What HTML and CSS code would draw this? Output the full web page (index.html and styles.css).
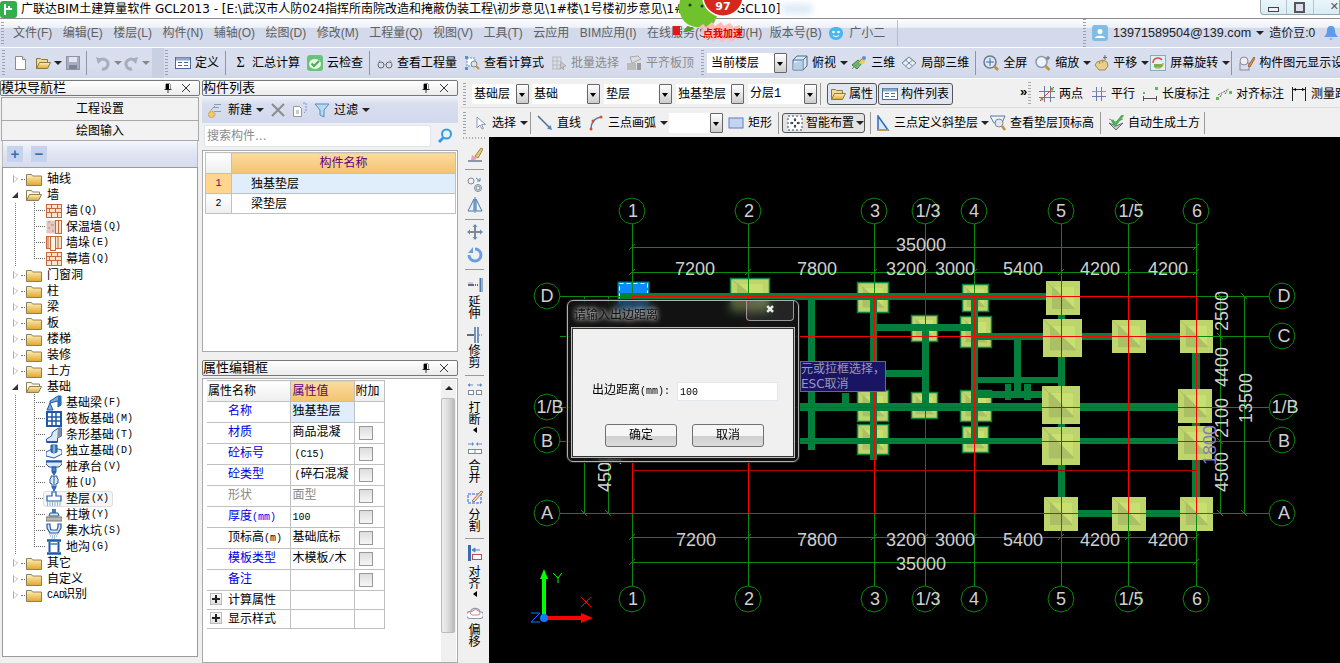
FILE: index.html
```html
<!DOCTYPE html>
<html lang="zh">
<head>
<meta charset="utf-8">
<title>广联达BIM土建算量软件</title>
<link rel="stylesheet" href="styles.css">
</head>
<body>
<svg class="defs" xmlns="http://www.w3.org/2000/svg">
<defs>
<linearGradient id="fy" x1="0" y1="0" x2="0" y2="1"><stop offset="0" stop-color="#fff2b8"/><stop offset="1" stop-color="#e0a530"/></linearGradient>
<symbol id="folder" viewBox="0 0 16 16"><path d="M.5 3.500h5l1 1.500h9v9.500H.5z" fill="url(#fy)" stroke="#8a8060"/></symbol>
<symbol id="folderopen" viewBox="0 0 16 16"><path d="M.5 13.500v-10h5l1 1.500h7v2" fill="#fff8dc" stroke="#8a8060"/><path d="M.5 13.500l3-6h12l-3 6z" fill="url(#fy)" stroke="#8a8060"/></symbol>
<symbol id="brick" viewBox="0 0 16 16"><rect x=".5" y="1.500" width="15" height="13" fill="#f8e4cc" stroke="#c8673a"/><path d="M0 5.500h16M0 9.500h16M5.500 2v3M11.500 2v3M3.500 6v3M9.500 6v3M5.500 10v4M11.500 10v4" stroke="#c8673a" fill="none"/></symbol>
<symbol id="ins" viewBox="0 0 16 16"><rect x=".5" y="1.500" width="9" height="13" fill="#e4c8bc"/><path d="M2 3h2M5 6h3M2 9h2M6 12h2" stroke="#b88" fill="none"/><rect x="9.500" y="1.500" width="6" height="13" fill="#f8e4cc" stroke="#c8673a"/><path d="M12.500 2v12" stroke="#c8673a"/></symbol>
<symbol id="pier" viewBox="0 0 16 16"><rect x=".5" y="1.500" width="15" height="12" fill="#f8e4cc" stroke="#c8673a"/><rect x="4.500" y="1.500" width="5" height="14" fill="#fdf4e8" stroke="#c8673a"/><path d="M12 2v11M2 2v11" stroke="#c8673a"/></symbol>
<symbol id="fbeam" viewBox="0 0 16 16"><path d="M1 15l3-7 3 7zM4 8V6l8-5h3v9l-3 2V6z" fill="#7fa8d8" stroke="#1f5aa8"/><path d="M12 1h3v9l-3 2z" fill="#2a6cc0"/></symbol>
<symbol id="raft" viewBox="0 0 16 16"><rect x="1" y="1" width="14" height="14" fill="#fff" stroke="#1f5aa8" stroke-width="2"/><path d="M6 1v14M10 1v14M1 6h14M1 10h14" stroke="#1f5aa8" stroke-width="1.500"/></symbol>
<symbol id="strip" viewBox="0 0 16 16"><path d="M.5 15v-3l5-3 1-4 6-4h3v8l-4 2v4z" fill="#dce8f6" stroke="#1f5aa8"/><path d="M12 1h3.500v8l-4 2V6z" fill="#7a8fa8"/><path d="M.5 15h11" stroke="#1f5aa8" stroke-width="2"/></symbol>
<symbol id="indep" viewBox="0 0 16 16"><path d="M0 9l8-4 8 2v4l-8 4-8-2z" fill="#eef4fb" stroke="#1f5aa8"/><path d="M5 2h6v7l-3 1-3-1z" fill="#4a7ab0" stroke="#1f5aa8"/><path d="M8 2v8" stroke="#cde"/></symbol>
<symbol id="cap" viewBox="0 0 16 16"><path d="M0 2h16v3l-3 3H3L0 5z" fill="#dce8f6" stroke="#1f5aa8"/><path d="M0 2.500h16" stroke="#1f5aa8" stroke-width="2"/><path d="M6 8h4v5H6zM6 13l2 3 2-3z" fill="#4a86c8" stroke="#1f5aa8"/></symbol>
<symbol id="pile" viewBox="0 0 16 16"><path d="M5 1h6v2l1 1v4l-2 1v3H6V9L4 8V4l1-1z" fill="#dce8f6" stroke="#1f5aa8"/><path d="M6 12l2 4 2-4z" fill="#4a86c8" stroke="#1f5aa8"/><path d="M8 1v11" stroke="#1f5aa8"/></symbol>
<symbol id="pad" viewBox="0 0 16 16"><path d="M6 1h4v4h5v5H1V5h5z" fill="#fff" stroke="#1f5aa8" stroke-width="1.200"/><path d="M1 12h14M1 14h14" stroke="#6f9bd0" stroke-dasharray="1 1.500" stroke-width="1.500"/></symbol>
<symbol id="pier2" viewBox="0 0 16 16"><path d="M6 2h4v4H6z" fill="#4a7ab0"/><path d="M4 6h8l1 3H3z" fill="#dce8f6" stroke="#1f5aa8"/><rect y="10" width="16" height="4" fill="#b8b8b0" stroke="#777"/></symbol>
<symbol id="sump" viewBox="0 0 16 16"><path d="M1 1h3v3l1 3h6l1-3V1h3v4l-3 5H4L1 5z" fill="#dce8f6" stroke="#1f5aa8" stroke-width="1.200"/><path d="M3 11h10M4 13h8M6 15h4" stroke="#7fb2e0" stroke-dasharray="1 1" stroke-width="1.500"/></symbol>
<symbol id="ditch" viewBox="0 0 16 16"><path d="M1 1.500h14M1 14.500h14" stroke="#1f5aa8" stroke-width="2.500"/><path d="M3.500 3v10M12.500 3v10" stroke="#1f5aa8" stroke-width="2"/><path d="M4 5h8" stroke="#6f9bd0" stroke-width="2"/></symbol>
<symbol id="new" viewBox="0 0 16 16"><path d="M3.500 1.500h7l3 3v10h-10z" fill="#fff" stroke="#8c8c8c"/><path d="M10.500 1.500v3h3" fill="#ddd" stroke="#8c8c8c"/></symbol>
<symbol id="open" viewBox="0 0 16 16"><path d="M1.500 13.500v-10h4l1 1h6v3" fill="#f3dc98" stroke="#8a7a40"/><path d="M1.500 13.500l3-6h11l-3 6z" fill="url(#fy)" stroke="#8a7a40"/></symbol>
<symbol id="save" viewBox="0 0 16 16"><rect x="1.500" y="1.500" width="13" height="13" fill="#a8aec0" stroke="#8d93a5"/><rect x="4" y="2" width="8" height="5" fill="#e2e5ee"/><rect x="4" y="10" width="8" height="4" fill="#7d8498"/></symbol>
<symbol id="undo" viewBox="0 0 16 16"><path d="M4 6a5 5 0 1 1 3 8" fill="none" stroke="#a8aebf" stroke-width="3"/><path d="M1 2l7 2-5 5z" fill="#a8aebf"/></symbol>
<symbol id="redo" viewBox="0 0 16 16"><path d="M12 6a5 5 0 1 0-3 8" fill="none" stroke="#a8aebf" stroke-width="3"/><path d="M15 2L8 4l5 5z" fill="#a8aebf"/></symbol>
<symbol id="define" viewBox="0 0 16 16"><rect x=".5" y="2.500" width="15" height="11" fill="#fff" stroke="#4b6a9c"/><path d="M1 2.500h14v3H1z" fill="#8ea8cc"/><path d="M3 7.500h4M3 10.500h4M9 7.500h4M9 10.500h4" stroke="#4b6a9c"/></symbol>
<symbol id="cloudok" viewBox="0 0 16 16"><rect width="16" height="16" rx="3" fill="#69c47a"/><ellipse cx="8" cy="9" rx="6" ry="5" fill="#e8f6e4"/><path d="M4.500 8.500L7 11l5-5" fill="none" stroke="#4aa85c" stroke-width="2"/></symbol>
<symbol id="glasses" viewBox="0 0 16 16"><circle cx="4" cy="10" r="3" fill="none" stroke="#666"/><circle cx="12" cy="10" r="3" fill="none" stroke="#666"/><path d="M7 9.500h2M1 9l2-4M15 9l-2-4" stroke="#999" fill="none"/></symbol>
<symbol id="calc" viewBox="0 0 16 16"><path d="M3 3h8v8H3z" fill="#fff" stroke="#5b8fd0" stroke-dasharray="2 1"/><path d="M1 1h3v3H1zM1 12h3v3H1z" fill="#5b8fd0"/><circle cx="10" cy="9" r="3" fill="#d8e4ee" stroke="#888"/><path d="M12 11l3 3" stroke="#c09040" stroke-width="2"/></symbol>
<symbol id="batch" viewBox="0 0 16 16"><path d="M1 2h9M1 6h9M1 10h9M1 14h9M2 2v12M6 2v12M10 2v12" stroke="#bbb" fill="none"/><path d="M10 7l5 4-3 .5 1 2.500-1 .5-1-2.500-2 2z" fill="#ccc" stroke="#aaa"/></symbol>
<symbol id="flat" viewBox="0 0 16 16"><path d="M1 8h9v7H1z" fill="#bbb"/><path d="M4 2l8-1 3 3-9 4z" fill="#ddd" stroke="#aaa"/><path d="M11 8h4v7h-4z" fill="#999"/></symbol>
<symbol id="cube" viewBox="0 0 16 16"><path d="M1 5l4-4h10v10l-4 4H1z" fill="#d8e8f4" stroke="#4a6a8a"/><path d="M1 5h10v10M11 5l4-4" fill="none" stroke="#4a6a8a"/><path d="M1 9l10-4v10H1z" fill="#a8c4e0" opacity=".7"/></symbol>
<symbol id="three" viewBox="0 0 16 16"><path d="M1 10l6-5 4 3-5 6z" fill="#6cb86c" stroke="#3a8a3a"/><circle cx="11" cy="6" r="3" fill="#e8d060"/><path d="M1 14l12-12" stroke="#888"/><circle cx="13" cy="3" r="2" fill="#5b8fd0"/></symbol>
<symbol id="part3" viewBox="0 0 16 16"><path d="M1 8l7-6 7 6-7 6z" fill="#e8eef6" stroke="#7a8ea8"/><path d="M4.500 5l7 6M8 2l7 6M4.500 11l7-6M1 8l7-6" stroke="#7a8ea8" fill="none"/></symbol>
<symbol id="full" viewBox="0 0 16 16"><circle cx="7" cy="7" r="6" fill="#dfe8f4" stroke="#6a7a90" stroke-width="1.500"/><path d="M7 3v8M3 7h8" stroke="#3a6ab0"/><path d="M11 11l4 4" stroke="#b89040" stroke-width="2.500"/></symbol>
<symbol id="zoomi" viewBox="0 0 16 16"><circle cx="6.500" cy="7" r="5.500" fill="#eef3fa" stroke="#8a9ab0" stroke-width="1.500"/><path d="M10.500 11l4 4" stroke="#c09040" stroke-width="2.500"/><path d="M13 1v4M11 3h4" stroke="#666"/></symbol>
<symbol id="hand" viewBox="0 0 16 16"><path d="M2 10l2-3 6-2 4 2 1 4-3 4H6z" fill="#e8cf90" stroke="#a08a50"/><path d="M6 6l1 3M9 5l1 3" stroke="#a08a50"/><path d="M12 0v5M10 2.500h4" stroke="#666"/></symbol>
<symbol id="rot" viewBox="0 0 16 16"><rect x=".5" y=".5" width="15" height="15" fill="#e0f0f8" stroke="#8ab"/><path d="M3 8a5 5 0 0 1 9-3" fill="none" stroke="#d85030" stroke-width="1.500"/><path d="M13 8a5 5 0 0 1-9 3" fill="none" stroke="#e0a030" stroke-width="1.500"/><path d="M4 9h8v3H4z" fill="#70b060"/></symbol>
<symbol id="disp" viewBox="0 0 16 16"><rect x="1" y="8" width="9" height="7" fill="#dde" stroke="#889"/><circle cx="5" cy="6" r="4" fill="#eee" stroke="#889"/><path d="M9 11l6-9 1 1-5 9z" fill="#e0a050" stroke="#a06030"/></symbol>
<symbol id="twop" viewBox="0 0 16 16"><path d="M5.500 0v16M11.500 0v16M0 5.500h16M0 11.500h16" stroke="#6a7ab0" fill="none"/><path d="M1 15L15 1" stroke="#d04030"/><circle cx="3" cy="13" r="1.500" fill="#70a040"/><circle cx="13" cy="3" r="1.500" fill="#70a040"/></symbol>
<symbol id="para" viewBox="0 0 16 16"><path d="M5.500 1v14M10.500 1v14M1 5.500h14M1 10.500h14" stroke="#6a7ab0" fill="none"/><path d="M1 5.500h14" stroke="#d08080"/></symbol>
<symbol id="dimlen" viewBox="0 0 16 16"><path d="M1 12.500h14M1.500 10v5M14.500 10v5" stroke="#555" fill="none"/><rect x="1" y="6" width="2" height="2" fill="#5cb85c"/><rect x="13" y="1" width="3" height="3" fill="#5cb85c"/></symbol>
<symbol id="dimal" viewBox="0 0 16 16"><path d="M2 9l11-6M4 11l2-3M9 8l2-3" stroke="#555" stroke-dasharray="2 1" fill="none"/><rect y="11" width="3" height="3" fill="#5cb85c"/><rect x="13" y="5" width="3" height="3" fill="#5cb85c"/></symbol>
<symbol id="meas" viewBox="0 0 16 16"><path d="M1.500 1v14M14.500 1v14" stroke="#222" fill="none"/><path d="M2 3.500h12" stroke="#222" fill="none"/><path d="M2 3.500l3-1.500v3zM14 3.500l-3-1.500v3z"/></symbol>
<symbol id="cursor" viewBox="0 0 16 16"><path d="M5 2v11l3-3 2 4 1.500-.5-2-4h4z" fill="#fff" stroke="#8a9ab8"/></symbol>
<symbol id="linei" viewBox="0 0 16 16"><path d="M1 1l12 12" stroke="#4a6a9a" stroke-width="1.500"/><path d="M15 15l-5-1.500 3.500-3.500z" fill="#4a8ac8"/></symbol>
<symbol id="arc" viewBox="0 0 16 16"><path d="M3 14C3 7 7 3 13 2" fill="none" stroke="#4a7ab0" stroke-width="1.500"/><circle cx="3" cy="14" r="1.500" fill="#d85030"/><circle cx="5" cy="6" r="1.500" fill="#d85030"/><circle cx="13" cy="2" r="1.500" fill="#d85030"/></symbol>
<symbol id="recti" viewBox="0 0 16 16"><rect x="1" y="3" width="14" height="10" fill="#c4d4f0" stroke="#5b7fc0"/></symbol>
<symbol id="smart" viewBox="0 0 16 16"><rect x="1" y="1" width="14" height="14" fill="#fff" stroke="#26508a" stroke-dasharray="2 2"/><path d="M8 3v3M8 10v3M3 8h3M10 8h3" stroke="#222"/><path d="M8 6.500l-1.500-2h3zM8 9.500l-1.500 2h3zM6.500 8l-2-1.500v3zM9.500 8l2-1.500v3z" fill="#222"/></symbol>
<symbol id="slope" viewBox="0 0 16 16"><path d="M3 1v14h10z" fill="#d8e8f8" stroke="#2a6cc0" stroke-width="1.500"/><path d="M3 15h10" stroke="#e0a030" stroke-width="1.500"/></symbol>
<symbol id="viewt" viewBox="0 0 16 16"><path d="M0 1h15l-3 7H4z" fill="#eef3fa" stroke="#5a7aa0"/><circle cx="9" cy="8" r="4" fill="#dfe8f4" stroke="#888"/><path d="M12 11l3 4" stroke="#c09040" stroke-width="2.500"/></symbol>
<symbol id="autot" viewBox="0 0 16 16"><path d="M1 8l7 3 7-3-7 7z" fill="#c8ccd4" stroke="#667"/><path d="M1 4l7 3 7-3" fill="none" stroke="#889"/><path d="M4 5l3 5 8-10" fill="none" stroke="#4cb050" stroke-width="2.500"/></symbol>
<symbol id="brush" viewBox="0 0 16 16"><path d="M8 10l6-8 2 1-5 9z" fill="#e8c870" stroke="#a08a50"/><path d="M5 9l5 3-2 2H4z" fill="#e8a0b8"/><path d="M1 15h14" stroke="#6a7a90" stroke-width="1.500"/></symbol>
<symbol id="ocirc" viewBox="0 0 16 16"><circle cx="4" cy="5" r="3" fill="none" stroke="#7a8a9c"/><circle cx="11" cy="12" r="3.500" fill="none" stroke="#7a8a9c"/><circle cx="11" cy="12" r="2" fill="none" stroke="#7a8a9c"/><path d="M9 2l4 3M13 2v3h-3" fill="none" stroke="#4a8ac8"/></symbol>
<symbol id="mirror" viewBox="0 0 16 16"><path d="M7 2L1 14h6zM9 2l6 12H9z" fill="#e8f0fa" stroke="#4a78b0"/><path d="M8 0v16" stroke="#4a78b0"/></symbol>
<symbol id="move" viewBox="0 0 16 16"><path d="M8 1v14M1 8h14" stroke="#7a8a9c" stroke-width="2"/><path d="M8 0l2.500 3h-5zM8 16l2.500-3h-5zM0 8l3-2.500v5zM16 8l-3-2.500v5z" fill="#6a8ab0"/></symbol>
<symbol id="rotate" viewBox="0 0 16 16"><path d="M8 2a6 6 0 1 1-6 6" fill="none" stroke="#6a9ee0" stroke-width="3"/><path d="M6 0v6H1z" fill="#6a9ee0"/></symbol>
<symbol id="extend" viewBox="0 0 16 16"><path d="M13.500 1v14" stroke="#4a78b0" stroke-width="2"/><path d="M15.500 1v14" stroke="#9ab"/><path d="M1 8h6" stroke="#667" stroke-width="2"/><path d="M8 8h4" stroke="#667" stroke-dasharray="1 1" stroke-width="2"/><path d="M1 6h5" stroke="#9ab"/></symbol>
<symbol id="trim" viewBox="0 0 16 16"><path d="M8 0v16M11 0v16" stroke="#4a78b0" stroke-width="1.500"/><path d="M0 8h7" stroke="#667" stroke-width="2"/><path d="M12 8h4" stroke="#aab" stroke-dasharray="1 1" stroke-width="2"/></symbol>
<symbol id="breaki" viewBox="0 0 16 16"><path d="M1 3h5M10 3h5" stroke="#5a8ad0"/><path d="M1 3l2-2v4zM15 3l-2-2v4z" fill="#5a8ad0"/><rect x="1.500" y="8.500" width="5" height="4" fill="#fff" stroke="#7a8a9c"/><rect x="9.500" y="8.500" width="5" height="4" fill="#fff" stroke="#7a8a9c"/></symbol>
<symbol id="merge" viewBox="0 0 16 16"><path d="M1 3h5M10 3h5" stroke="#5a8ad0"/><path d="M7 3L5 1v4zM9 3l2-2v4z" fill="#5a8ad0"/><rect x="1.500" y="8.500" width="13" height="4" fill="#fff" stroke="#7a8a9c"/><path d="M8 8v5" stroke="#7a8a9c"/></symbol>
<symbol id="split" viewBox="0 0 16 16"><rect x="1" y="5" width="13" height="9" fill="#eef" stroke="#3060d0" stroke-dasharray="3 1"/><path d="M5 12l9-10 2 1-9 10z" fill="#f0e0c0" stroke="#a07050"/></symbol>
<symbol id="alignv" viewBox="0 0 16 16"><path d="M1 0h3v16H1z" fill="#3a6ab0"/><path d="M5 5h8M5 5l3-2v4z" stroke="#4a8ac8" fill="#4a8ac8"/><rect x="5.500" y="9.500" width="9" height="5" fill="#fff" stroke="#c05050"/></symbol>
<symbol id="offs" viewBox="0 0 16 16"><path d="M3 12a3 3 0 0 1 1-6 4.500 4.500 0 0 1 8.500 0 3 3 0 0 1 0 6z" fill="#fff" stroke="#8a9ab0" transform="translate(-1 1) scale(1.120)"/><path d="M5 11a2 2 0 0 1 1-4 3 3 0 0 1 5 0 2 2 0 0 1 0 4z" fill="none" stroke="#e08080"/></symbol>
<symbol id="addi" viewBox="0 0 16 16"><path d="M6 2h7v1H6zM6 5h5v1H6zM6 9h7v1H6z" fill="#8a9ab0"/><path d="M7 4L3 8" stroke="#8a9ab0"/><path d="M2 9h3v2h2v3H5v2H2v-2H0v-3h2z" fill="#f0d060" stroke="#b09030" stroke-width=".5"/></symbol>
<symbol id="xi" viewBox="0 0 16 16"><path d="M2 2l12 12M14 2L2 14" stroke="#8c8c8c" stroke-width="2"/></symbol>
<symbol id="copyi" viewBox="0 0 16 16"><path d="M1.500 4.500h6l2 2v8h-8z" fill="#fff" stroke="#999"/><path d="M4 9h3M4 11h3" stroke="#999"/><path d="M11 1h3v8l-2 2" fill="none" stroke="#6a9ad8" stroke-dasharray="2 1"/></symbol>
<symbol id="funnel" viewBox="0 0 16 16"><path d="M1 2h14L10 8v7l-4-2V8z" fill="#b8d8f4" stroke="#5a8ac0"/></symbol>
<symbol id="search" viewBox="0 0 16 16"><circle cx="9.500" cy="6" r="4.500" fill="#e8f4fc" stroke="#3a9ae0" stroke-width="2"/><path d="M6 10l-4 4" stroke="#3a9ae0" stroke-width="3"/></symbol>
<symbol id="pin" viewBox="0 0 10 10"><path d="M3 1h4v5H3zM1.500 6.500h7M5 7v3" fill="#000" stroke="#000" stroke-width=".8"/><path d="M6 1h1v5H6z" fill="#fff"/></symbol>
<symbol id="closex" viewBox="0 0 10 10"><path d="M1 1l8 8M9 1l-8 8" stroke="#333"/></symbol>
<symbol id="smile" viewBox="0 0 16 16"><path d="M8 2c4 0 7 2 7 6s-3 7-7 7-7-3-7-7 3-6 7-6z" fill="#49b6ef"/><circle cx="5.500" cy="7" r="1.300" fill="#fff"/><circle cx="10.500" cy="7" r="1.300" fill="#fff"/><path d="M5 10.500q3 2.500 6 0" fill="none" stroke="#fff"/></symbol>
<symbol id="avatar" viewBox="0 0 16 16"><rect width="16" height="16" rx="3" fill="#7fbde4"/><circle cx="8" cy="6.500" r="2.500" fill="#fff"/><path d="M3 13c0-3 10-3 10 0z" fill="#fff"/></symbol>
<symbol id="bell" viewBox="0 0 16 16"><path d="M8 1c3 0 4 2 4 5 0 3 2 5 3 6H1c1-1 3-3 3-6 0-3 1-5 4-5z" fill="#5d9ce8"/><path d="M6 13.500h4L8 15z" fill="#5d9ce8"/></symbol>
<symbol id="ft" viewBox="0 0 34 34" preserveAspectRatio="none"><rect width="34" height="34" fill="#bed56c"/><rect x="6" y="6" width="22" height="22" fill="#aabf66"/><path d="M6 6h22v22z" fill="#c9e070"/><path d="M6 6l22 22" stroke="#aabf66" stroke-width="2"/><path d="M0 0l6 6" stroke="#aabf66" stroke-width="1"/></symbol>
<symbol id="circ" viewBox="-14 -14 28 28" overflow="visible"><path d="M0-13l6.500 1.700 4.800 4.800L13 0l-1.700 6.500-4.800 4.800L0 13l-6.500-1.700-4.800-4.800L-13 0l1.700-6.500 4.800-4.800z" fill="#000" stroke="#0a8a0a"/></symbol>
</defs>
</svg>

<header class="titlebar">
  <svg class="logo" viewBox="0 0 17 17"><rect width="17" height="17" rx="3" fill="#2fb04a"/><path d="M5 3v11M5 8h7M9 5v3" stroke="#fff" stroke-width="2" fill="none"/></svg>
  <span class="title-text">广联达BIM土建算量软件 GCL2013 - [E:\武汉市人防024指挥所南院改造和掩蔽伪装工程\初步意见\1#楼\1号楼初步意见\1#楼初步见.GCL10]</span>
  <span class="glow"></span>
  <div class="winctl"><span class="wc wc-min"><b></b></span><span class="wc wc-max"><b></b></span><span class="wc wc-close">✕</span></div>
</header>

<nav class="menubar">
  <span class="grip"></span>
  <div class="menus">
    <span>文件(F)</span><span>编辑(E)</span><span>楼层(L)</span><span>构件(N)</span><span>辅轴(O)</span><span>绘图(D)</span><span>修改(M)</span><span>工程量(Q)</span><span>视图(V)</span><span>工具(T)</span><span>云应用</span><span>BIM应用(I)</span><span>在线服务(S)</span><span class="m-help">帮助(H)</span><span>版本号(B)</span>
    <span class="mi"><svg class="i"><use href="#smile"/></svg>广小二</span>
  </div>
  <span class="vline"></span>
  <div class="account">
    <span class="grip g2"></span>
    <svg class="i"><use href="#avatar"/></svg>
    <span class="email">13971589504@139.com</span><i class="tri"></i>
    <span>造价豆:0</span>
    <svg class="i bell"><use href="#bell"/></svg>
  </div>
</nav>

<svg class="mascot" viewBox="0 0 110 48">
  <path d="M20 0c-2 10 0 22 12 26 8 3 16 2 22-3L64 0z" fill="#6fc22c"/>
  <path d="M28 26l-5 6 12-3zM45 27l7 4-2-6z" fill="#4fa51e"/>
  <path d="M22 4l-7 5 7 1z" fill="#6fc22c"/>
  <circle cx="30" cy="5" r="1.500" fill="#234"/><circle cx="42" cy="6" r="1.500" fill="#234"/>
  <circle cx="63" cy="-4" r="21" fill="#fff"/><circle cx="63" cy="-4" r="19.500" fill="#d8261c"/>
  <text x="63" y="10" class="badge">97</text>
  <path d="M38 28l5-4 3 3 6-5 3 4 6-4 3 4 6-3 3 4 7-2-1 5 4 3-4 3 3 4-7-1-3 3-5-3-5 3-4-3-5 2-3-3-6 1 1-4-5-3 4-3z" fill="#fcbcbc"/>
  <text x="63" y="37" class="speed">点我加速</text>
  <rect x="13" y="26" width="7" height="9" fill="#e01818"/>
</svg>

<div class="toolbar1">
  <span class="grip"></span>
  <svg class="i ml6"><use href="#new"/></svg>
  <svg class="i ml7"><use href="#open"/></svg><i class="tri dark"></i>
  <svg class="i ml3"><use href="#save"/></svg>
  <span class="sep s5"></span>
  <svg class="i"><use href="#undo"/></svg><i class="tri grey"></i>
  <svg class="i ml1"><use href="#redo"/></svg><i class="tri grey"></i>
  <span class="tb-end"></span>
  <span class="grip g4"></span>
  <span class="t"><svg class="i"><use href="#define"/></svg>定义</span><span class="sep"></span>
  <span class="t"><b class="sigma">Σ</b>汇总计算</span>
  <span class="t"><svg class="i"><use href="#cloudok"/></svg>云检查</span><span class="sep"></span>
  <span class="t"><svg class="i"><use href="#glasses"/></svg>查看工程量</span>
  <span class="t"><svg class="i"><use href="#calc"/></svg>查看计算式</span>
  <span class="t off"><svg class="i"><use href="#batch"/></svg>批量选择</span>
  <span class="t off"><svg class="i"><use href="#flat"/></svg>平齐板顶</span>
  <span class="grip g3"></span>
  <span class="combo cb-floor"><span>当前楼层</span><i class="cb-btn"></i></span>
  <span class="t mr3"><svg class="i"><use href="#cube"/></svg>俯视<i class="tri dark"></i></span>
  <span class="t mr6"><svg class="i"><use href="#three"/></svg>三维</span>
  <span class="t"><svg class="i"><use href="#part3"/></svg>局部三维</span><span class="sep"></span>
  <span class="t mr8"><svg class="i"><use href="#full"/></svg>全屏</span>
  <span class="t mr2"><svg class="i"><use href="#zoomi"/></svg>缩放<i class="tri dark"></i></span>
  <span class="t mr1"><svg class="i"><use href="#hand"/></svg>平移<i class="tri dark"></i></span>
  <span class="t"><svg class="i"><use href="#rot"/></svg>屏幕旋转<i class="tri dark"></i></span><span class="sep s1"></span>
  <span class="t t-last"><svg class="i"><use href="#disp"/></svg>构件图元显示设置</span>
</div>

<main class="main">
  <aside class="left">
    <div class="ph"><span class="ph-t">模块导航栏</span><svg class="pin"><use href="#pin"/></svg><svg class="pin"><use href="#closex"/></svg></div>
    <div class="navbtn">工程设置</div>
    <div class="navbtn">绘图输入</div>
    <div class="treebar"><span class="tbtn">+</span><span class="tbtn">−</span></div>
    <div class="tree">
      <div class="r"><i class="exp"></i><svg class="i"><use href="#folder"/></svg>轴线</div>
      <div class="r"><i class="exp on"></i><svg class="i"><use href="#folderopen"/></svg>墙</div>
      <div class="r c"><svg class="i"><use href="#brick"/></svg>墙<em>(Q)</em></div>
      <div class="r c"><svg class="i"><use href="#ins"/></svg>保温墙<em>(Q)</em></div>
      <div class="r c"><svg class="i"><use href="#pier"/></svg>墙垛<em>(E)</em></div>
      <div class="r c end"><svg class="i"><use href="#brick"/></svg>幕墙<em>(Q)</em></div>
      <div class="r"><i class="exp"></i><svg class="i"><use href="#folder"/></svg>门窗洞</div>
      <div class="r"><i class="exp"></i><svg class="i"><use href="#folder"/></svg>柱</div>
      <div class="r"><i class="exp"></i><svg class="i"><use href="#folder"/></svg>梁</div>
      <div class="r"><i class="exp"></i><svg class="i"><use href="#folder"/></svg>板</div>
      <div class="r"><i class="exp"></i><svg class="i"><use href="#folder"/></svg>楼梯</div>
      <div class="r"><i class="exp"></i><svg class="i"><use href="#folder"/></svg>装修</div>
      <div class="r"><i class="exp"></i><svg class="i"><use href="#folder"/></svg>土方</div>
      <div class="r"><i class="exp on"></i><svg class="i"><use href="#folderopen"/></svg>基础</div>
      <div class="r c"><svg class="i"><use href="#fbeam"/></svg>基础梁<em>(F)</em></div>
      <div class="r c"><svg class="i"><use href="#raft"/></svg>筏板基础<em>(M)</em></div>
      <div class="r c"><svg class="i"><use href="#strip"/></svg>条形基础<em>(T)</em></div>
      <div class="r c"><svg class="i"><use href="#indep"/></svg>独立基础<em>(D)</em></div>
      <div class="r c"><svg class="i"><use href="#cap"/></svg>桩承台<em>(V)</em></div>
      <div class="r c"><svg class="i"><use href="#pile"/></svg>桩<em>(U)</em></div>
      <div class="r c"><span class="selbox"><svg class="i"><use href="#pad"/></svg>垫层<em>(X)</em></span></div>
      <div class="r c"><svg class="i"><use href="#pier2"/></svg>柱墩<em>(Y)</em></div>
      <div class="r c"><svg class="i"><use href="#sump"/></svg>集水坑<em>(S)</em></div>
      <div class="r c end"><svg class="i"><use href="#ditch"/></svg>地沟<em>(G)</em></div>
      <div class="r"><i class="exp"></i><svg class="i"><use href="#folder"/></svg>其它</div>
      <div class="r"><i class="exp"></i><svg class="i"><use href="#folder"/></svg>自定义</div>
      <div class="r"><i class="exp"></i><svg class="i"><use href="#folder"/></svg><span><em class="cad">CAD</em>识别</span></div>
    </div>
  </aside>

  <section class="mid">
    <div class="ph"><span class="ph-t">构件列表</span><svg class="pin"><use href="#pin"/></svg><svg class="pin"><use href="#closex"/></svg></div>
    <div class="listbar">
      <span class="t"><svg class="i"><use href="#addi"/></svg>新建<i class="tri dark"></i></span>
      <svg class="i"><use href="#xi"/></svg>
      <svg class="i"><use href="#copyi"/></svg>
      <span class="t"><svg class="i"><use href="#funnel"/></svg>过滤<i class="tri dark"></i></span>
    </div>
    <div class="searchrow"><span class="searchbox">搜索构件...</span><svg class="i"><use href="#search"/></svg></div>
    <div class="listbox">
      <table class="ltable">
        <tr><th class="n"></th><th class="lh">构件名称</th></tr>
        <tr class="cur"><td class="n">1</td><td class="nm">独基垫层</td></tr>
        <tr><td class="n">2</td><td class="nm">梁垫层</td></tr>
      </table>
    </div>
    <div class="ph ph2"><span class="ph-t">属性编辑框</span><svg class="pin"><use href="#pin"/></svg><svg class="pin"><use href="#closex"/></svg></div>
    <div class="propbox">
      <table class="ptable">
        <tr class="phd"><th class="pn0">属性名称</th><th class="pv0">属性值</th><th>附加</th></tr>
        <tr><td class="lnk">名称</td><td class="edit">独基垫层</td><td></td></tr>
        <tr><td class="lnk">材质</td><td>商品混凝</td><td><i class="chk"></i></td></tr>
        <tr><td class="lnk">砼标号</td><td class="ind"><em>(C15)</em></td><td><i class="chk"></i></td></tr>
        <tr><td class="lnk">砼类型</td><td class="ind"><em>(</em>碎石混凝</td><td><i class="chk"></i></td></tr>
        <tr class="dis"><td class="lnk">形状</td><td>面型</td><td><i class="chk"></i></td></tr>
        <tr><td class="lnk">厚度<em>(mm)</em></td><td><em>100</em></td><td><i class="chk"></i></td></tr>
        <tr><td class="lnk blk">顶标高<em>(m)</em></td><td>基础底标</td><td><i class="chk"></i></td></tr>
        <tr><td class="lnk">模板类型</td><td>木模板<em>/</em>木</td><td><i class="chk"></i></td></tr>
        <tr><td class="lnk">备注</td><td></td><td><i class="chk"></i></td></tr>
        <tr class="grp"><td><i class="plus"></i>计算属性</td><td></td><td></td></tr>
        <tr class="grp"><td><i class="plus"></i>显示样式</td><td></td><td></td></tr>
      </table>
      <div class="sbar"><i class="sb-up"></i><i class="sb-thumb"></i></div>
    </div>
  </section>

  <section class="right">
    <div class="rt1">
      <span class="grip"></span>
      <span class="combo c45"><span>基础层</span><i class="cb-btn"></i></span>
      <span class="combo c56"><span>基础</span><i class="cb-btn"></i></span>
      <span class="combo c56"><span>垫层</span><i class="cb-btn"></i></span>
      <span class="combo c56"><span>独基垫层</span><i class="cb-btn"></i></span>
      <span class="combo c57"><span>分层<em class="dj">1</em></span><i class="cb-btn"></i></span>
      <span class="sep sp-a"></span>
      <span class="tog"><svg class="i"><use href="#open"/></svg>属性</span>
      <span class="tog"><svg class="i"><use href="#define"/></svg>构件列表</span>
      <span class="more">»</span>
      <span class="sep2"></span>
      <span class="t mr8"><svg class="i"><use href="#twop"/></svg>两点</span>
      <span class="t"><svg class="i"><use href="#para"/></svg>平行</span>
      <span class="t mr6"><svg class="i"><use href="#dimlen"/></svg>长度标注</span>
      <span class="t"><svg class="i"><use href="#dimal"/></svg>对齐标注</span>
      <span class="t t-last"><svg class="i"><use href="#meas"/></svg>测量距离</span>
    </div>
    <div class="rt2">
      <span class="grip"></span>
      <span class="t tc1"><svg class="i"><use href="#cursor"/></svg>选择<i class="tri dark"></i></span><span class="sep sp-b"></span>
      <span class="t"><svg class="i"><use href="#linei"/></svg>直线</span>
      <span class="t t-arc"><svg class="i"><use href="#arc"/></svg>三点画弧<i class="tri dark"></i></span>
      <span class="combo c41"><span></span><i class="cb-btn"></i></span>
      <span class="t"><svg class="i"><use href="#recti"/></svg>矩形</span><span class="sep sp-c"></span>
      <span class="tog smart"><svg class="i"><use href="#smart"/></svg>智能布置<i class="tri dark"></i></span><span class="sep sp-d"></span>
      <span class="t mr1 slope"><svg class="i"><use href="#slope"/></svg>三点定义斜垫层<i class="tri dark"></i></span>
      <span class="t"><svg class="i"><use href="#viewt"/></svg>查看垫层顶标高</span><span class="sep sp-e"></span>
      <span class="t"><svg class="i"><use href="#autot"/></svg>自动生成土方</span><span class="sep sp-f"></span>
    </div>
    <div class="work">
      <div class="vbar">
        <span class="grip-h"></span>
        <svg class="i m7"><use href="#brush"/></svg><span class="vs m7"></span>
        <svg class="i m6"><use href="#ocirc"/></svg>
        <svg class="i m5"><use href="#mirror"/></svg><span class="vs m6"></span>
        <svg class="i m4"><use href="#move"/></svg>
        <svg class="i m7"><use href="#rotate"/></svg><span class="vs m6"></span>
        <div class="v m7"><svg class="i"><use href="#extend"/></svg><span class="m3">延伸</span></div>
        <div class="v m7"><svg class="i"><use href="#trim"/></svg><span class="m2">修剪</span></div><span class="vs m6"></span>
        <div class="v m6"><svg class="i"><use href="#breaki"/></svg><span class="m4">打断</span><i class="tl"></i></div>
        <div class="v m8"><svg class="i"><use href="#merge"/></svg><span class="m3">合并</span></div>
        <div class="v m5"><svg class="i"><use href="#split"/></svg><span class="m4">分割</span></div><span class="vs m5"></span>
        <div class="v m6"><svg class="i"><use href="#alignv"/></svg><span class="m5">对齐</span><i class="tl"></i></div>
        <div class="v m7"><svg class="i"><use href="#offs"/></svg><span class="m4">偏移</span></div>
      </div>
      <div class="canvas">
        <svg class="cad-svg" viewBox="489 137 851 526" width="851" height="526">
          <g class="ftb">
            <use href="#ft" x="857" y="282" width="32" height="31"/><use href="#ft" x="857" y="390" width="32" height="32"/><use href="#ft" x="857" y="424" width="32" height="31"/>
            <use href="#ft" x="911" y="315" width="27" height="27"/><use href="#ft" x="911" y="392" width="27" height="27"/>
            <use href="#ft" x="962" y="284" width="27" height="28"/><use href="#ft" x="960" y="316" width="32" height="32"/><use href="#ft" x="960" y="390" width="32" height="32"/><use href="#ft" x="962" y="426" width="27" height="27"/>
            <use href="#ft" x="730" y="278" width="40" height="34"/>
            <rect class="fo" x="857.500" y="282.500" width="31" height="30"/><rect class="fo" x="857.500" y="390.500" width="31" height="31"/><rect class="fo" x="857.500" y="424.500" width="31" height="30"/><rect class="fo" x="911.500" y="315.500" width="26" height="26"/><rect class="fo" x="911.500" y="392.500" width="26" height="26"/><rect class="fo" x="962.500" y="284.500" width="26" height="27"/><rect class="fo" x="960.500" y="316.500" width="31" height="31"/><rect class="fo" x="960.500" y="390.500" width="31" height="31"/><rect class="fo" x="962.500" y="426.500" width="26" height="26"/><rect class="fo" x="730.500" y="278.500" width="39" height="33"/>
          </g>
          <rect x="618" y="282" width="31" height="30" fill="#0a8cff" stroke="#0b8040"/>
          <rect x="619.500" y="283.500" width="28" height="28" fill="none" stroke="#fff" stroke-dasharray="4 3"/>
          <g class="beam">
            <rect x="620" y="293" width="431" height="7"/><rect x="808" y="300" width="7" height="150"/><rect x="870" y="300" width="7" height="160"/><rect x="876" y="324" width="97" height="7"/><rect x="922" y="331" width="7" height="74"/><rect x="971" y="300" width="7" height="140"/><rect x="978" y="333" width="70" height="7"/><rect x="1014" y="340" width="7" height="52"/><rect x="978" y="377" width="82" height="6"/><rect x="978" y="391" width="70" height="7"/><rect x="1005" y="384" width="6" height="16"/><rect x="1024" y="384" width="7" height="16"/><rect x="800" y="403" width="248" height="8"/><rect x="800" y="438" width="242" height="6"/><rect x="860" y="370" width="62" height="7"/><rect x="842" y="393" width="7" height="10"/>
            <rect x="1058" y="310" width="7" height="14"/><rect x="1058" y="353" width="7" height="38"/><rect x="1058" y="420" width="7" height="7"/><rect x="1058" y="457" width="7" height="43"/>
            <rect x="1077" y="333" width="40" height="7"/><rect x="1141" y="333" width="42" height="7"/><rect x="1080" y="403" width="98" height="8"/><rect x="1080" y="438" width="98" height="6"/><rect x="1192" y="353" width="8" height="36"/><rect x="1192" y="423" width="8" height="3"/><rect x="1192" y="460" width="8" height="37"/><rect x="1075" y="510" width="42" height="7"/><rect x="1141" y="510" width="42" height="7"/>
          </g>
          <g class="ftb">
            <use href="#ft" x="1046" y="281" width="34" height="34"/><use href="#ft" x="1043" y="319" width="39" height="38"/><use href="#ft" x="1042" y="386" width="38" height="38"/><use href="#ft" x="1042" y="427" width="38" height="38"/><use href="#ft" x="1044" y="497" width="34" height="34"/><use href="#ft" x="1112" y="320" width="34" height="33"/><use href="#ft" x="1112" y="497" width="34" height="34"/><use href="#ft" x="1180" y="320" width="33" height="33"/><use href="#ft" x="1178" y="389" width="34" height="34"/><use href="#ft" x="1178" y="426" width="34" height="34"/><use href="#ft" x="1180" y="497" width="33" height="34"/>
          </g>
          <path class="axis crisp" d="M632 224V586M748 224V586M874 224V586M925 224V586M974 224V586M1061 224V586M1128 224V586M1196 224V586M560 296H1269M560 336H1269M560 407H1269M560 441H1269M560 513H1269M632 247H1196M632 272H1196M632 537H1196M632 562H1196M584 296V513M608 296V513M1220 296V513M1244 296V513"/>
          <path class="axis" d="M629 250l6-6M629 275l6-6M745 275l6-6M871 275l6-6M922 275l6-6M971 275l6-6M1058 275l6-6M1125 275l6-6M1193 250l6-6M1193 275l6-6M629 540l6-6M629 565l6-6M745 540l6-6M871 540l6-6M922 540l6-6M971 540l6-6M1058 540l6-6M1125 540l6-6M1193 540l6-6M1193 565l6-6M1217 293l6 6M1241 293l6 6M1217 333l6 6M1217 404l6 6M1217 438l6 6M1217 510l6 6M1241 510l6 6M581 510l6 6M605 510l6 6"/>
          <path class="red crisp" d="M632 296H1196M632 336H1196M632 407H1196M632 441H1196M632 513H1196M632 296V513M748 296V513M874 296V513M925 296V513M974 296V513M1061 296V513M1128 296V513M1196 296V513"/>
          <path class="redd crisp" d="M632 470H1196"/>
          <g>
            <use href="#circ" x="618" y="197" width="28" height="28"/><use href="#circ" x="734" y="197" width="28" height="28"/><use href="#circ" x="860" y="197" width="28" height="28"/><use href="#circ" x="911" y="197" width="28" height="28"/><use href="#circ" x="960" y="197" width="28" height="28"/><use href="#circ" x="1047" y="197" width="28" height="28"/><use href="#circ" x="1114" y="197" width="28" height="28"/><use href="#circ" x="1182" y="197" width="28" height="28"/>
            <use href="#circ" x="618" y="585" width="28" height="28"/><use href="#circ" x="734" y="585" width="28" height="28"/><use href="#circ" x="860" y="585" width="28" height="28"/><use href="#circ" x="911" y="585" width="28" height="28"/><use href="#circ" x="960" y="585" width="28" height="28"/><use href="#circ" x="1047" y="585" width="28" height="28"/><use href="#circ" x="1114" y="585" width="28" height="28"/><use href="#circ" x="1182" y="585" width="28" height="28"/>
            <use href="#circ" x="533" y="282" width="28" height="28"/><use href="#circ" x="533" y="393" width="28" height="28"/><use href="#circ" x="533" y="426" width="28" height="28"/><use href="#circ" x="533" y="499" width="28" height="28"/>
            <use href="#circ" x="1268" y="282" width="28" height="28"/><use href="#circ" x="1268" y="322" width="28" height="28"/><use href="#circ" x="1268" y="393" width="28" height="28"/><use href="#circ" x="1268" y="426" width="28" height="28"/><use href="#circ" x="1268" y="499" width="28" height="28"/>
          </g>
          <g class="lbl">
            <text x="633" y="217">1</text><text x="749" y="217">2</text><text x="875" y="217">3</text><text x="928" y="217">1/3</text><text x="974" y="217">4</text><text x="1061" y="217">5</text><text x="1131" y="217">1/5</text><text x="1197" y="217">6</text>
            <text x="633" y="605">1</text><text x="749" y="605">2</text><text x="875" y="605">3</text><text x="928" y="605">1/3</text><text x="974" y="605">4</text><text x="1061" y="605">5</text><text x="1131" y="605">1/5</text><text x="1197" y="605">6</text>
            <text x="547" y="302">D</text><text x="550" y="413">1/B</text><text x="547" y="447">B</text><text x="547" y="519">A</text>
            <text x="1284" y="302">D</text><text x="1284" y="342">C</text><text x="1285" y="413">1/B</text><text x="1284" y="447">B</text><text x="1284" y="519">A</text>
            <text x="921" y="251">35000</text><text x="695" y="275">7200</text><text x="817" y="275">7800</text><text x="906" y="275">3200</text><text x="955" y="275">3000</text><text x="1023" y="275">5400</text><text x="1100" y="275">4200</text><text x="1168" y="275">4200</text>
            <text x="696" y="546">7200</text><text x="817" y="546">7800</text><text x="906" y="546">3200</text><text x="955" y="546">3000</text><text x="1023" y="546">5400</text><text x="1100" y="546">4200</text><text x="1168" y="546">4200</text><text x="921" y="570">35000</text>
            <text transform="translate(1228 311) rotate(-90)">2500</text><text transform="translate(1228 367) rotate(-90)">4400</text><text transform="translate(1228 418) rotate(-90)">2100</text><text transform="translate(1228 472) rotate(-90)">4500</text><text transform="translate(1252 398) rotate(-90)">13500</text>
            <text transform="translate(611 472) rotate(-90)">4500</text><text transform="translate(589 400) rotate(-90)">13500</text><text class="pur" transform="translate(1216 445) rotate(-90)">1800</text><text transform="translate(621 445) rotate(-90)">1800</text>
          </g>
          <path d="M542 618V579h-2l4-10 4 10h-2V618z" fill="#0f0"/>
          <path d="M544 616H581v-3l12 5-12 5v-3H544z" fill="#f00"/>
          <circle cx="544" cy="618" r="4" fill="#0a7cff"/>
          <path d="M553 573l5 5 4-5M558 578v5" fill="none" stroke="#0f0"/>
          <path d="M581 597l10 10M591 597l-10 10" stroke="#f00"/>
          <path d="M531 613h9l-9 9h9" fill="none" stroke="#0a7cff"/>
        </svg>
        <div class="tip">元或拉框选择，<br>ESC取消</div>
        <div class="dialog">
          <div class="dlg-title"><span>请输入出边距离</span><span class="dlg-x">✖</span></div>
          <div class="dlg-body">
            <div class="dlg-row"><label>出边距离<em>(mm)</em><em>:</em></label><span class="dlg-input"><em>100</em></span></div>
            <div class="dlg-btns"><span class="btn">确定</span><span class="btn">取消</span></div>
          </div>
        </div>
      </div>
    </div>
  </section>
</main>
</body>
</html>
```
FILE: styles.css
```css
html,body{margin:0;padding:0}
body{width:1340px;height:663px;overflow:hidden;background:#f0f0f0;color:#000;font:12px/16px "DejaVu Sans","Noto Sans CJK SC",sans-serif;position:relative}
em{font:normal 10px/16px "Liberation Mono","DejaVu Sans Mono",monospace}
i{font-style:normal;display:block}
.defs{display:block;width:0;height:0}
.i{width:16px;height:16px;flex:none;display:block}
.m2{margin-top:2px}.m3{margin-top:3px}.m4{margin-top:4px}.m5{margin-top:5px}.m6{margin-top:6px}.m7{margin-top:7px}.m8{margin-top:8px}

.titlebar{height:18px;background:#fff;border-bottom:1px solid #8a8a8a;display:flex;align-items:center;overflow:hidden;white-space:nowrap}
.logo{width:17px;height:17px;flex:none;margin-right:4px}
.title-text{font-size:12px}
.glow{width:30px;height:10px;background:#dcebf7;filter:blur(3px);margin-left:2px}
.winctl{margin-left:auto;width:78px;height:14px;align-self:flex-start;display:flex;border:1px solid #9aa6ac;border-top:0;border-radius:0 0 0 4px;background:linear-gradient(#eaf6fb,#d7ecf5)}
.wc{width:26px;border-right:1px solid #b5c4cc;display:flex;align-items:center;justify-content:center}
.wc-min b{display:block;width:9px;height:3px;border:1px solid #444;margin-top:5px;background:#eef}
.wc-max b{display:block;width:7px;height:7px;border:2px solid #555;background:#dde}
.wc-close{border:0;justify-content:flex-end;font-size:11px;color:#555;overflow:hidden;line-height:14px}

.menubar{height:28px;display:flex;align-items:center;background:linear-gradient(#fbfcfe 0,#eef1f8 30%,#d3daec 32%,#d3daec 100%);color:#5f5f5f;white-space:nowrap;border-bottom:1px solid #fff}
.grip{display:block;flex:none;width:3px;height:22px;margin:0 1px;background:repeating-linear-gradient(#9aa2b4 0 1px,transparent 1px 3px)}
.menus{display:flex;gap:10.500px;padding-left:8px;font-family:"Liberation Sans","Noto Sans CJK SC",sans-serif;font-size:12px}
.m-help{margin-right:-3px}
.mi{display:flex;align-items:center;gap:5px;margin-left:-4px}
.vline{width:1px;height:26px;background:#b8bdc8;margin-left:12px}
.account{margin-left:auto;display:flex;align-items:center;gap:5px;width:258px;color:#222;font-family:"Liberation Sans","Noto Sans CJK SC",sans-serif}
.g2{height:28px;margin:0 1px 0 1px}
.email{font-size:12.600px}
.account .tri{margin:0}
.bell{margin-left:3px}
.tri{flex:none;width:0;height:0;border:4px solid transparent;border-top-color:#222;border-bottom:0;margin-left:3px}
.tri.grey{border-top-color:#888;margin:0 0 0 3px}
.t .tri{margin-left:0}

.mascot{position:absolute;left:660px;top:0;width:110px;height:48px}
.badge{font:bold 11px "DejaVu Sans",sans-serif;fill:#fff;text-anchor:middle}
.speed{font:bold 10px "Noto Sans CJK SC",sans-serif;fill:#e00000;text-anchor:middle}

.toolbar1{height:31px;display:flex;align-items:center;background:linear-gradient(#d8deef,#d9dfee 60%,#cfd6e8);white-space:nowrap;overflow:hidden;border-bottom:1px solid #fff;box-sizing:border-box;padding-left:1px}
.toolbar1 .grip{height:26px}
.ml1{margin-left:1px}.ml3{margin-left:3px}.ml6{margin-left:6px}.ml7{margin-left:7px}
.mr1{margin-right:1px!important}.mr2{margin-right:2px!important}.mr3{margin-right:3px!important}.mr6{margin-right:6px!important}.mr8{margin-right:8px!important}
.sep{flex:none;width:1px;height:24px;background:#8e95a4;margin:0 7px 0 6px}
.s5{margin:0 8px 0 5px}
.s1{margin-left:1px}
.tb-end{flex:none;width:12px;height:30px;background:#c9d0e2;margin-left:2px}
.t{display:flex;align-items:center;gap:4px;flex:none;margin-right:7px}
.t:has(+.sep){margin-right:0}
.g4{margin:0 7px 0 1px}
.off{color:#8a8a8a}
.sigma{font:normal 14px "Liberation Serif",serif;width:15px;text-align:center}
.g3{margin:0 3px 0 0}
.combo{display:flex;align-items:center;justify-content:space-between;background:#fff;height:20px;flex:none;margin-right:4px;padding-left:2px;box-sizing:border-box}
.combo .dj{font-size:12px}
.cb-floor{width:80px;margin-right:5px;padding-left:4px}
.cb-btn{flex:none;width:13px;height:20px;border:1px solid #666;box-sizing:border-box;border-radius:1px;background:linear-gradient(#fff,#ccc);position:relative}
.cb-btn::after{content:"";position:absolute;left:2px;top:8px;border:3.500px solid transparent;border-top:4px solid #000;border-bottom:0}
.t-last{margin-right:0}

.main{display:flex;height:584px;background:#f0f0f0}
.left{width:200px;flex:none;display:flex;flex-direction:column;overflow:hidden}
.ph{height:14px;margin:1px 0 0;border:1px solid #777;border-radius:2px;background:linear-gradient(#fff,#ececec);display:flex;align-items:center;font-size:13px;line-height:14px;box-sizing:content-box}
.ph-t{margin-right:auto}
.pin{width:10px;height:10px;margin-right:8px;flex:none}
.navbtn{height:22px;line-height:22px;margin:1px 1px 0;text-align:center;border:1px solid #a8a8a8;background:#f2f2f2;box-sizing:content-box}
.navbtn+.navbtn{height:19px;margin-top:0;border-top:0;line-height:21px}
.treebar{height:26px;flex:none;margin:0 2px;background:linear-gradient(#f4f6fb,#e2e7f4 40%,#d6dcee);display:flex;align-items:center;gap:8px;padding-left:4px;border-left:1px solid #bbb;border-right:1px solid #bbb}
.tbtn{display:block;width:14px;height:14px;background:#c7d3ec;border:1px solid #c9d3ee;color:#2f74b8;font:bold 15px/13px "Liberation Sans",sans-serif;text-align:center}
.tree{flex:1;margin:0 2px 6px;border:1px solid #9a9a9a;background:#fff;padding-top:3px;font-size:12px;white-space:nowrap}
.r{height:16px;display:flex;align-items:center;gap:5px;padding-left:10px}
.r.c{padding-left:43px;position:relative;gap:4px;background:repeating-linear-gradient(#777 0 1px,transparent 1px 2px) 12px 0/1px 100% no-repeat}
.r.c::before{content:"";position:absolute;left:31px;top:7px;width:11px;border-top:1px dotted #666}
.r.c::after{content:"";position:absolute;left:31px;top:-1px;height:17px;border-left:1px dotted #666}
.r.c.end::after{height:9px}
.r em{margin-left:-3px}
.exp{flex:none;width:0;height:0;border:4.500px solid transparent;border-left:5px solid #aaa;border-right:0;position:relative;margin-right:3px}
.exp::after{content:"";position:absolute;left:-4px;top:-3.500px;border:3.500px solid transparent;border-left:3px solid #fff;border-right:0}
.exp::before{content:"";position:absolute;left:3px;top:0;width:6px;border-top:1px dotted #777}
.exp.on{border:0;border-bottom:6px solid #333;border-left:6px solid transparent;margin-left:-1px;margin-right:3px}
.exp.on::after,.exp.on::before{display:none}
.selbox{display:flex;align-items:center;gap:4px;position:relative;z-index:1;margin-left:-3px;padding:0 3px 0 2px;height:16px;box-sizing:border-box;border:1px solid #ddd;border-radius:3px;background:#f6f6f6}
.r .cad{margin:0 -2px 0 0}

.mid{width:258px;flex:none;margin-left:2px;display:flex;flex-direction:column;overflow:hidden}
.mid .ph{margin-right:2px}
.listbar{height:27px;flex:none;display:flex;align-items:center;gap:6px;padding-left:6px;background:linear-gradient(#f0f3fa,#d8deef 30%,#d2d9ec);margin-right:2px}
.listbar .t{margin:0}
.searchrow{height:25px;flex:none;display:flex;align-items:center;gap:6px;padding-left:2px;margin-right:2px;background:#eef0f5}
.searchbox{display:block;width:227px;height:22px;line-height:21px;box-sizing:border-box;background:#fff;border:1px solid #e0e3ea;border-radius:2px;padding-left:2px;color:#8a8a8a}
.listbox{height:202px;flex:none;box-sizing:border-box;margin:2px 2px 0 0;padding:1px;background:#fff;border:1px solid #aaa}
.ltable,.ptable{border-collapse:collapse;table-layout:fixed}
.ltable{width:251px;margin-left:1px}
.ltable th,.ltable td{border:1px solid #c0c0c0;padding:0;font-weight:400;height:19px}
.ltable tr:first-child th{height:20px}
.ltable th.n,.ltable td.n{width:25px;text-align:center;background:linear-gradient(#fff,#eee);font:10px "Liberation Mono",monospace}
.ltable .cur td.n{background:#ffd58f;color:#600080}
.ltable td.nm{padding-left:19px}
.ltable .cur td.nm{background:#e0eefb}
.lh{background:linear-gradient(#fbdc9f,#f3c270);color:#600080;font-weight:400}
.ph2{margin-top:8px}
.propbox{flex:1;margin-top:2px;margin-right:2px;border:1px solid #aaa;background:#fff;display:flex;justify-content:space-between;overflow:hidden;padding:1px 0 0 4px}
.ptable{width:178px;align-self:flex-start}
.ptable td,.ptable th{box-sizing:border-box;border:1px solid #c0c0c0;padding:1px 1px 0;height:21px;font-weight:400;vertical-align:top;line-height:16px;overflow:hidden;white-space:nowrap}
.ptable td:first-child,.ptable th:first-child{width:83px;border-left:0}
.ptable td:nth-child(2),.ptable th:nth-child(2){width:64px;padding-left:2px}
.ptable th{text-align:left;background:linear-gradient(#fff,#eee);vertical-align:middle;padding-top:0}
.ptable .pv0{background:linear-gradient(#fbdc9f,#f3c270);color:#600080}
.ptable td:first-child{padding-left:21px}
.ptable tr td:nth-child(3){text-align:center}
.lnk{color:#0000e0}
.blk{color:#000}
.dis td{color:#888}
.edit{background:#e0eefb}
.ind{padding-left:4px!important}
.chk{width:12px;height:12px;border:1px solid #999;background:linear-gradient(#ddd,#f6f6f6);margin:2px 0 0 3px}
.ptable .grp td{height:19px}
.ptable .grp td:first-child{padding-left:3px}
.plus{display:inline-block;vertical-align:-1px;width:10px;height:10px;border:1px solid #bbb;background:linear-gradient(#fff,#ddd);position:relative;margin-right:6px}
.plus::before{content:"";position:absolute;left:1px;top:4px;width:8px;border-top:2px solid #222}
.plus::after{content:"";position:absolute;left:4px;top:1px;height:8px;border-left:2px solid #222}
.sbar{width:15px;height:100%;background:#f0f0f0;flex:none;margin-right:1px}
.sb-up{width:0;height:0;border:4px solid transparent;border-bottom:4px solid #222;border-top:0;margin:6px auto 0}
.sb-thumb{width:14px;height:235px;margin:8px 0 0;background:linear-gradient(90deg,#eee,#ddd 50%,#bbb);border:1px solid #bbb;border-radius:2px;box-sizing:border-box}

.right{flex:1;min-width:0;display:flex;flex-direction:column;overflow:hidden}
.rt1,.rt2{height:28px;flex:none;display:flex;align-items:center;white-space:nowrap;overflow:hidden;padding-left:2px;box-sizing:border-box;background:#f0f0f0;border-bottom:1px solid #ddd}
.rt1{margin-top:1px}
.rt2{height:29px;border-bottom:0}
.c45{width:57px;margin:0 3px 0 5px}
.c56{width:68px}
.c57{width:69px;margin-right:3px}
.c41{width:54px;margin:0 5px 0 1px}
.sep.sp-a{margin:0 6px 0 0;background:#9a9a9a;height:22px}
.sep.sp-b{margin:0 6px 0 2px;background:#9a9a9a;height:22px}
.sep.sp-c{margin:0 3px 0 6px;background:#9a9a9a;height:22px}
.sep.sp-d{margin:0 4px 0 5px;background:#9a9a9a;height:22px}
.sep.sp-e{margin:0 7px 0 6px;background:#9a9a9a;height:22px}
.sep.sp-f{margin:0 0 0 4px;background:#9a9a9a;height:22px}
.tog{display:flex;align-items:center;gap:3px;flex:none;height:20px;padding:0 3px 0 2px;border:1px solid #555;border-radius:3px;background:#dfe6f2;margin-right:1px}
.tog+.tog{padding:0 3px}
.more{flex:none;margin:-4px 1px 0 66px;width:7px;font:bold 13px "Liberation Sans",sans-serif}
.sep2{flex:none;width:3px;height:24px;background:repeating-linear-gradient(#aaa 0 1px,transparent 1px 3px);margin-right:8px}
.tc1{margin-left:5px;margin-right:0}
.t-arc{margin-right:0}
.tog.smart{padding:0 0 0 4px;background:#e3e3e3;margin:0;width:83px;box-sizing:border-box}
.smart .tri{margin-left:-1px}
.slope{gap:3px}

.work{flex:1;display:flex;min-height:0}
.vbar{width:29px;flex:none;background:#f0f0f0;display:flex;flex-direction:column;align-items:center;overflow:hidden}
.grip-h{width:24px;height:2px;flex:none;background:repeating-linear-gradient(90deg,#aaa 0 1px,transparent 1px 3px)}
.vs{width:19px;height:1px;flex:none;background:#999}
.v{display:flex;flex-direction:column;align-items:center;flex:none;line-height:12px}
.v span{width:12px;line-height:12px;display:block}
.tl{width:0;height:0;border:3px solid transparent;border-right:4px solid #000;border-left:0;margin-top:1px}
.canvas{flex:1;background:#000;position:relative;overflow:hidden}
.cad-svg{display:block}
.crisp{shape-rendering:crispEdges}
.fo{fill:none;stroke:#0b8040;stroke-width:1.500}
.beam rect{fill:#03803c}
.axis{fill:none;stroke:#0a8a0a}
.red{fill:none;stroke:#f00}
.redd{fill:none;stroke:#b00000}
.lbl text{font:18px "Liberation Sans",sans-serif;fill:#d0d0d0;text-anchor:middle}
.lbl .pur{fill:#8a7ab8}
.tip{position:absolute;left:311px;top:224px;width:86px;height:31px;box-sizing:border-box;background:#1a1464;border:1px solid #6a6a7a;color:#9a9ab0;line-height:15px;font-size:12px;white-space:nowrap;overflow:hidden}
.dialog{position:absolute;left:78px;top:163px;width:232px;height:162px;box-sizing:border-box;border:1px solid #b0b0b0;border-radius:6px;background:rgba(30,30,30,.6);backdrop-filter:blur(5px);display:flex;flex-direction:column;padding:0 4px 4px;box-shadow:0 0 0 1px #222}
.dlg-title{height:27px;flex:none;display:flex;align-items:center;justify-content:space-between;color:#111;text-shadow:0 0 4px #ddd,0 0 6px #bbb;padding-left:2px}
.dlg-x{width:46px;height:19px;margin:-8px 0 0;border:1px solid #999;border-top:0;border-radius:0 0 4px 4px;color:#eee;text-align:center;font-size:11px;line-height:17px;text-shadow:none;background:rgba(255,255,255,.08)}
.dlg-body{flex:1;background:#f0f0f0;border:1px solid #333;box-shadow:0 0 0 1px #bbb;display:flex;flex-direction:column;padding:52px 15px 0 19px}
.dlg-row{display:flex;align-items:center;justify-content:space-between;height:20px}
.dlg-row label{white-space:nowrap}
.dlg-input{display:block;width:101px;height:19px;background:#fff;border:1px solid #e3e8ef;box-sizing:border-box;padding-left:2px;line-height:17px}
.dlg-btns{display:flex;gap:15px;margin:23px 0 0 13px}
.btn{display:block;width:72px;height:23px;box-sizing:border-box;text-align:center;line-height:21px;border:1px solid #707070;border-radius:3px;background:linear-gradient(#f6f6f6 50%,#cfcfcf 55%,#ddd)}
```
